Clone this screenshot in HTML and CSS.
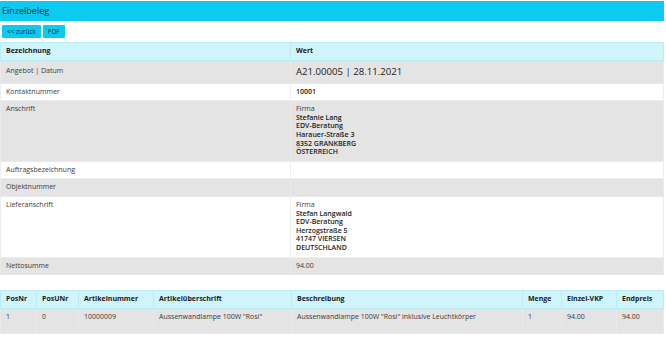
FILE: index.html
```html
<!DOCTYPE html>
<html lang="de">
<head>
<meta charset="utf-8">
<title>Einzelbeleg</title>
<link rel="stylesheet" href="styles.css">
</head>
<body>
<div class="page">
  <div class="titlebar">Einzelbeleg</div>
  <div class="buttons">
    <button class="btn">&lt;&lt; zurück</button>
    <button class="btn">PDF</button>
  </div>
  <table class="tbl details">
    <colgroup><col class="c-label"><col></colgroup>
    <thead>
      <tr><th>Bezeichnung</th><th>Wert</th></tr>
    </thead>
    <tbody>
      <tr class="gray first"><td>Angebot | Datum</td><td class="big">A21.00005 | 28.11.2021</td></tr>
      <tr><td>Kontaktnummer</td><td class="strong">10001</td></tr>
      <tr class="gray"><td>Anschrift</td><td class="strong"><span class="norm">Firma</span><br>Stefanie Lang<br>EDV-Beratung<br>Harauer-Straße 3<br>8352 GRANKBERG<br>ÖSTERREICH</td></tr>
      <tr><td>Auftragsbezeichnung</td><td></td></tr>
      <tr class="gray"><td>Objektnummer</td><td></td></tr>
      <tr><td>Lieferanschrift</td><td class="strong"><span class="norm">Firma</span><br>Stefan Langwald<br>EDV-Beratung<br>Herzogstraße 5<br>41747 VIERSEN<br>DEUTSCHLAND</td></tr>
      <tr class="gray"><td>Nettosumme</td><td>94.00</td></tr>
    </tbody>
  </table>
  <table class="tbl positions">
    <colgroup>
      <col style="width:36px"><col style="width:42px"><col style="width:75px"><col style="width:138px"><col style="width:231px"><col style="width:39px"><col style="width:55px"><col>
    </colgroup>
    <thead>
      <tr><th>PosNr</th><th>PosUNr</th><th>Artikelnummer</th><th>Artikelüberschrift</th><th>Beschreibung</th><th>Menge</th><th>Einzel-VKP</th><th>Endpreis</th></tr>
    </thead>
    <tbody>
      <tr class="gray tall"><td>1</td><td>0</td><td>10000009</td><td>Aussenwandlampe 100W "Rosi"</td><td>Aussenwandlampe 100W "Rosi" inklusive Leuchtkörper</td><td>1</td><td>94.00</td><td>94.00</td></tr>
    </tbody>
  </table>
</div>
</body>
</html>
```
FILE: styles.css
```css
html, body {
  margin: 0;
  padding: 0;
  background: #fff;
}
body {
  font-family: "Open Sans", "Noto Sans", sans-serif;
  font-size: 7px;
  color: #3a3a3a;
}
.page {
  padding: 1px 2px 0 0;
}
.titlebar {
  background: #0dcaf0;
  height: 20px;
  line-height: 19px;
  font-size: 9px;
  color: #1b2a30;
  padding-left: 2px;
}
.buttons {
  display: flex;
  gap: 2px;
  padding: 4px 0 4px 2px;
}
.btn {
  font-family: inherit;
  font-size: 6.4px;
  color: #1b2a30;
  background: #0dcaf0;
  border: 0;
  border-radius: 1px;
  height: 13px;
  padding: 0 5px;
  margin: 0;
}
.tbl {
  width: 100%;
  border-collapse: collapse;
  table-layout: fixed;
}
.tbl th, .tbl td {
  text-align: left;
  vertical-align: top;
  padding: 4px 5px;
  line-height: 8.6px;
  border: 1px solid #eeeeee;
}
.tbl th {
  background: #cff4fc;
  border-color: #b9ecf8;
  font-weight: 700;
  color: #1a1a1a;
}
.c-label {
  width: 290px;
}
.gray td {
  background: #e4e4e4;
  border-color: #e9e9e9;
}
.details td.big {
  font-size: 9.6px;
  line-height: 14px;
  font-weight: 500;
  color: #222;
}
.details .first td:first-child {
  padding-top: 6px;
}
.strong {
  font-weight: 600;
  color: #222;
}
.norm {
  font-weight: 400;
  color: #3a3a3a;
}
.positions {
  margin-top: 15px;
}
.positions .tall td {
  height: 16px;
}
```
